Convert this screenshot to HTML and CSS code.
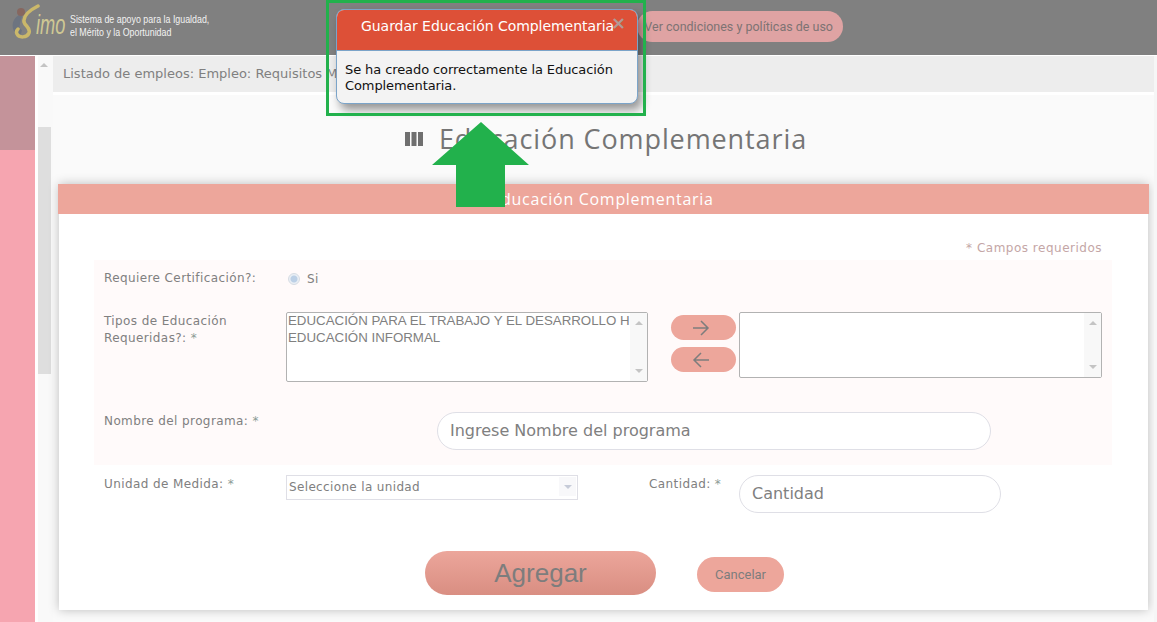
FILE: index.html
```html
<!DOCTYPE html>
<html lang="en">

<head>
    <meta charset="UTF-8">
    <title>Educación Complementaria</title>
    <link rel="stylesheet" href="styles.css">
</head>

<body>
    <!-- Top bar -->
    <header class="topbar">
        <div class="logo">
            <svg class="logo-swirl" width="28" height="36" viewBox="0 0 28 36">
                <path d="M7 11C1 14-1 22 2 27c1 2 4 3 7 3l1-4c-2-1-3-3-2-6 0-3 2-6 2-8z" fill="#6d7480"/>
                <circle cx="9" cy="8" r="4" fill="#86675f"/>
                <path d="M26 2C18 6 11 12 12 18c1 4 7 6 5 11-2 5-10 5-12 1-1-2 0-4 1-5" fill="none" stroke="#cbb86a" stroke-width="3.500" stroke-linecap="round"/>
            </svg>
            <span class="logo-word">imo</span>
        </div>
        <div class="logo-text">
            <span>Sistema de apoyo para la Igualdad,</span>
            <span>el Mérito y la Oportunidad</span>
        </div>
        <a href="#" class="terms-link">Ver condiciones y políticas de uso</a>
    </header>

    <div class="page">
        <aside class="sidebar">
            <div class="sidebar-dim"></div>
        </aside>
        <div class="scrollbar">
            <span class="arrow-up"></span>
            <div class="scrollbar-thumb"></div>
        </div>

        <main class="main">
            <div class="breadcrumb">Listado de empleos: Empleo: Requisitos Mínimos</div>
            <h1 class="page-title">
                <svg width="18" height="14" viewBox="0 0 18 14">
                    <rect width="5" height="14" fill="#6f6f6f"/>
                    <rect x="6.500" width="5" height="14" fill="#6f6f6f"/>
                    <rect x="13" width="5" height="14" fill="#6f6f6f"/>
                </svg>
                Educación Complementaria
            </h1>

            <section class="card">
                <div class="card-header">Educación Complementaria</div>
                <p class="required-note"><span>*</span> Campos requeridos</p>

                <div class="form-zone">
                    <div class="row row-cert">
                        <label class="label">Requiere Certificación?:</label>
                        <span class="radio"></span>
                        <span class="radio-text">Si</span>
                    </div>
                    <div class="row row-types">
                        <label class="label label-types">Tipos de Educación Requeridas?: <span>*</span></label>
                        <div class="listbox listbox-left">
                            <div class="listbox-items">
                                <div>EDUCACIÓN PARA EL TRABAJO Y EL DESARROLLO HUMANO</div>
                                <div>EDUCACIÓN INFORMAL</div>
                            </div>
                            <div class="listbox-scroll"><span class="arrow-up"></span><span class="arrow-down"></span></div>
                        </div>
                        <div class="move-buttons">
                            <button class="move-button">
                                <svg width="18" height="16" viewBox="0 0 18 16"><path d="M1 8h15M9 1l7 7-7 7" fill="none" stroke="#7d7d7d" stroke-width="1.500"/></svg>
                            </button>
                            <button class="move-button">
                                <svg width="18" height="16" viewBox="0 0 18 16"><path d="M17 8H2M9 1L2 8l7 7" fill="none" stroke="#7d7d7d" stroke-width="1.500"/></svg>
                            </button>
                        </div>
                        <div class="listbox listbox-right">
                            <div class="listbox-items"></div>
                            <div class="listbox-scroll"><span class="arrow-up"></span><span class="arrow-down"></span></div>
                        </div>
                    </div>
                    <div class="row row-name">
                        <label class="label">Nombre del programa: <span>*</span></label>
                        <div class="pill-input pill-name">Ingrese Nombre del programa</div>
                    </div>
                </div>

                <div class="row row-unit">
                    <label class="label">Unidad de Medida: <span>*</span></label>
                    <div class="unit-select">
                        <span>Seleccione la unidad</span>
                        <span class="unit-caret"><span class="arrow-down"></span></span>
                    </div>
                    <label class="label label-amount">Cantidad: <span>*</span></label>
                    <div class="pill-input pill-amount">Cantidad</div>
                </div>

                <div class="actions">
                    <button class="btn-add">Agregar</button>
                    <button class="btn-cancel">Cancelar</button>
                </div>
            </section>
        </main>

        <div class="page-scroll"></div>
    </div>

    <!-- Dialog with the green annotation on top -->
    <div class="dialog">
        <div class="dialog-title">Guardar Educación Complementaria<span class="dialog-close">×</span></div>
        <div class="dialog-body">Se ha creado correctamente la Educación Complementaria.</div>
    </div>
    <div class="mark-box"></div>
    <svg class="mark-arrow" width="97" height="85" viewBox="0 0 97 85">
        <path d="M49 0l48 43H73v42H24V43H0z" fill="#22b14c"/>
    </svg>
</body>

</html>
```

FILE: styles.css
```css
* {
    box-sizing: border-box;
}

body {
    position: relative;
    width: 1157px;
    height: 622px;
    margin: 0;
    overflow: hidden;
    font-family: 'DejaVu Sans', sans-serif;
    background-color: #fff;
}

button {
    border: none;
    padding: 0;
}

/* Top bar */
.topbar {
    display: flex;
    align-items: center;
    height: 55px;
    padding-left: 12px;
    background-color: #808080;
}

.logo {
    display: flex;
    align-items: flex-end;
    width: 58px;
    height: 36px;
    margin-bottom: 11px;
}

.logo-swirl {
    flex: none;
}

.logo-word {
    margin-left: -4px;
    font-family: 'Liberation Sans', sans-serif;
    font-size: 28px;
    font-style: italic;
    line-height: 30px;
    color: #cfc894;
    transform: scaleX(.65);
    transform-origin: left center;
}

.logo-text {
    display: flex;
    flex-direction: column;
    width: 170px;
    margin-bottom: 3px;
    font-family: 'Liberation Sans', sans-serif;
    font-size: 11.500px;
    line-height: 13px;
    color: #f2f2f2;
    white-space: nowrap;
    transform: scaleX(.77);
    transform-origin: left center;
}

.terms-link {
    display: flex;
    align-items: center;
    justify-content: flex-end;
    width: 206px;
    height: 31px;
    margin-left: 397px;
    margin-bottom: 2px;
    padding-right: 10px;
    border-radius: 16px;
    background-color: #dfa3a3;
    font-family: Roboto, sans-serif;
    font-size: 12.500px;
    color: #7d7373;
    text-decoration: none;
    white-space: nowrap;
}

/* Page frame */
.page {
    display: flex;
    height: 566px;
    margin-top: 1px;
}

.sidebar {
    flex: none;
    width: 35px;
    background-color: #f6a5b0;
}

.sidebar-dim {
    height: 94px;
    background-color: #c4939a;
}

.scrollbar {
    flex: none;
    display: flex;
    flex-direction: column;
    width: 15px;
    margin-left: 3px;
    padding-top: 7px;
    background-color: #f9f9f9;
}

.scrollbar .arrow-up {
    margin-left: 2px;
}

.scrollbar-thumb {
    width: 13px;
    height: 247px;
    margin-top: 60px;
    background-color: #dedede;
}

.arrow-up,
.arrow-down {
    display: block;
    width: 0;
    height: 0;
    border-left: 4px solid transparent;
    border-right: 4px solid transparent;
}

.arrow-up {
    border-bottom: 4px solid #c4c4c4;
}

.arrow-down {
    border-top: 4px solid #c4c4c4;
}

.main {
    flex: none;
    width: 1101px;
    background-color: #fafafa;
}

.page-scroll {
    flex: none;
    width: 3px;
    background-color: #f6f6f6;
}

.breadcrumb {
    height: 36px;
    padding-left: 10px;
    background-color: #ededed;
    font-size: 13px;
    line-height: 36px;
    color: #808080;
    white-space: nowrap;
}

.page-title {
    display: flex;
    align-items: center;
    justify-content: center;
    gap: 16px;
    height: 92px;
    margin: 0;
    padding: 0 0 2px 5px;
    border-top: 3px solid #fff;
    font-family: 'Open Sans', sans-serif;
    font-size: 27px;
    font-weight: 400;
    letter-spacing: .9px;
    color: #757575;
}

/* Form card */
.card {
    width: 1089px;
    height: 426px;
    margin-left: 6px;
    background-color: #fff;
    box-shadow: 0 0 10px rgba(0, 0, 0, .25);
}

.card-header {
    height: 30px;
    margin: 0 -1px;
    padding-right: 2px;
    background-color: #eda69b;
    font-family: 'Open Sans', sans-serif;
    font-size: 16px;
    letter-spacing: .7px;
    line-height: 30px;
    text-align: center;
    color: #fff;
}

.required-note {
    height: 46px;
    margin: 0;
    padding: 26px 46px 0 0;
    font-size: 12px;
    letter-spacing: .5px;
    line-height: 16px;
    text-align: right;
    color: #c4a6a6;
}

.form-zone {
    width: 1018px;
    height: 205px;
    margin-left: 35px;
    background-color: #fffafa;
}

.row {
    display: flex;
    align-items: flex-start;
    padding-left: 10px;
}

.label {
    flex: none;
    width: 182px;
    font-size: 12px;
    letter-spacing: .4px;
    line-height: 16px;
    color: #808080;
}

.label span {
    color: #8a9a94;
}

.row-cert {
    height: 52px;
    padding-top: 10px;
}

.radio {
    width: 12px;
    height: 12px;
    margin: 3px 0 0 2px;
    border: 1px solid #d6dce3;
    border-radius: 50%;
    background: radial-gradient(circle, #bcd0e6 0 3px, #eaeff5 4px);
}

.radio-text {
    margin: 1px 0 0 7px;
    font-size: 12px;
    letter-spacing: .4px;
    line-height: 16px;
    color: #808080;
}

.row-types {
    height: 100px;
}

.label-types {
    width: 150px;
    margin-right: 32px;
    padding-top: 1px;
    line-height: 17px;
}

.listbox {
    display: flex;
    border: 1px solid #b2b2b2;
    border-radius: 2px;
    background-color: #fff;
}

.listbox-left {
    width: 362px;
    height: 70px;
}

.listbox-right {
    width: 363px;
    height: 66px;
    margin-left: 3px;
}

.listbox-items {
    flex: 1;
    min-width: 0;
    overflow: hidden;
    padding-left: 1px;
    font-family: 'Liberation Sans', sans-serif;
    font-size: 13.300px;
    line-height: 17px;
    color: #808080;
    white-space: nowrap;
}

.listbox-items div:first-child {
    margin-top: -1px;
}

.listbox-scroll {
    flex: none;
    display: flex;
    flex-direction: column;
    justify-content: space-between;
    align-items: center;
    width: 17px;
    padding: 8px 0;
    background-color: #f8f8f8;
}

.move-buttons {
    display: flex;
    flex-direction: column;
    gap: 7px;
    margin: 3px 0 0 23px;
}

.move-button {
    display: flex;
    align-items: center;
    justify-content: center;
    width: 65px;
    height: 25px;
    padding-right: 6px;
    border-radius: 13px;
    background-color: #eda69b;
}

.row-name .label {
    padding-top: 1px;
}

.pill-input {
    height: 38px;
    padding-left: 12px;
    border: 1px solid #dfdfe6;
    border-radius: 19px;
    background-color: #fff;
    font-family: 'DejaVu Sans', sans-serif;
    font-size: 16px;
    line-height: 36px;
    color: #808080;
}

.pill-name {
    width: 554px;
    margin-left: 151px;
}

.row-unit {
    height: 76px;
    margin: 10px 0 0 35px;
}

.row-unit .label {
    padding-top: 1px;
}

.unit-select {
    display: flex;
    align-items: center;
    justify-content: space-between;
    width: 292px;
    height: 25px;
    padding: 0 1px 2px 2px;
    border: 1px solid #dfdfe6;
    font-size: 12px;
    letter-spacing: .35px;
    color: #808080;
}

.unit-caret {
    display: flex;
    align-items: center;
    justify-content: center;
    width: 17px;
    height: 19px;
    background-color: #f8f8fa;
}

.unit-caret .arrow-down {
    border-top-color: #c6cbd8;
}

.label-amount {
    width: 90px;
    margin-left: 71px;
}

.pill-amount {
    width: 262px;
}

.actions {
    display: flex;
    align-items: flex-start;
    gap: 41px;
    margin-left: 366px;
}

.btn-add {
    width: 231px;
    height: 44px;
    border-radius: 22px;
    background: linear-gradient(#eca69b, #d98e82);
    font-family: 'Liberation Sans', sans-serif;
    font-size: 26px;
    color: #7d7d7d;
}

.btn-cancel {
    width: 87px;
    height: 35px;
    margin-top: 6px;
    border-radius: 18px;
    background-color: #eda69b;
    font-family: Roboto, sans-serif;
    font-size: 13px;
    color: #7d7d7d;
}

/* Dialog and annotation */
.dialog {
    position: absolute;
    top: 9px;
    left: 336px;
    width: 302px;
    height: 95px;
    border: 1px solid #7ba4c9;
    border-radius: 8px;
    background-color: #f3f3f3;
    box-shadow: 4px 6px 10px rgba(0, 0, 0, .4);
}

.dialog-title {
    position: relative;
    height: 41px;
    padding: 6px 0 0 24px;
    border-bottom: 1px solid #7ba4c9;
    border-radius: 7px 7px 0 0;
    background-color: #dd5037;
    font-size: 14px;
    letter-spacing: -.05px;
    line-height: 20px;
    color: #fff;
    white-space: nowrap;
}

.dialog-close {
    position: absolute;
    top: 3px;
    left: 274px;
    font-size: 18px;
    font-weight: bold;
    color: #b09a96;
}

.dialog-body {
    padding: 11px 8px;
    font-size: 13px;
    letter-spacing: -.09px;
    line-height: 16px;
    color: #111;
}

.mark-box {
    position: absolute;
    top: 0;
    left: 326px;
    width: 320px;
    height: 116px;
    border: 3px solid #22b14c;
}

.mark-arrow {
    position: absolute;
    top: 122px;
    left: 432px;
}
```
